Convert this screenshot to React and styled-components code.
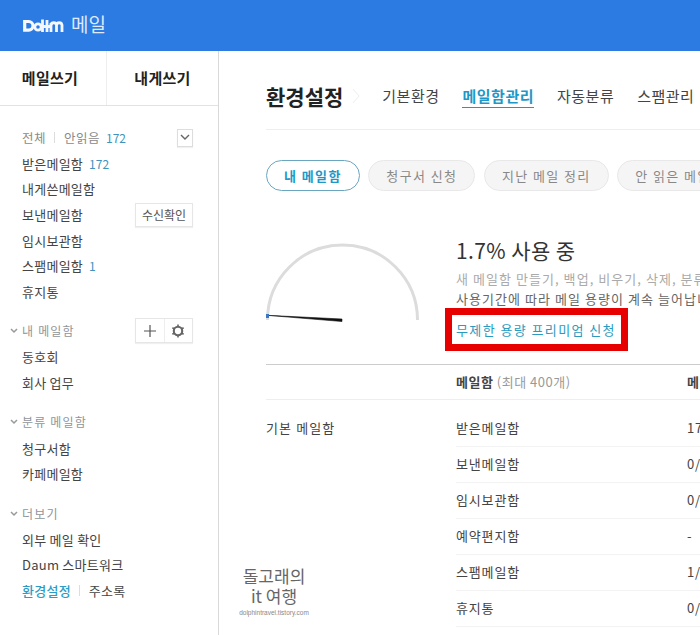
import React from 'react';
import styled, { createGlobalStyle } from 'styled-components';

const Global = createGlobalStyle`
  html, body { margin: 0; padding: 0; background: #fff; }
  body { width: 700px; height: 635px; overflow: hidden; font-family: "Noto Sans CJK KR", "Noto Sans", sans-serif; color: #333; }
  * { box-sizing: border-box; }
`;
const Page = styled.div`width: 700px; height: 635px; overflow: hidden; position: relative; display: flex; flex-direction: column;`;
const Header = styled.header`height: 51px; flex: none; background: #2b7be2; display: flex; align-items: center; padding-left: 23px; gap: 4px;`;
const LogoWord = styled.span`color: #dfe9fa; font-size: 19px; line-height: 24px; margin-top: -3px;`;
const Body = styled.div`flex: 1; display: flex; min-height: 0;`;
const Sidebar = styled.aside`width: 219px; flex: none; border-right: 1px solid #d9d9d9; height: 100%;`;
const Compose = styled.div`height: 55px; display: flex; border-bottom: 1px solid #dfe3e6;`;
const ComposeBtn = styled.div`
  flex: 1; display: flex; align-items: center; justify-content: center; font-size: 15px; font-weight: 700; color: #222; letter-spacing: 0.3px; padding-bottom: 1px;
  & + & { border-left: 1px solid #eee; }
  &:first-child { flex: 0 0 106px; padding-right: 6px; }
`;
const Nav = styled.nav`padding: 19px 25px 0 22px;`;
const Row = styled.div`height: 25.6px; display: flex; align-items: center; font-size: 13px; letter-spacing: 0.25px; color: ${p => p.$active ? '#2d9bc4' : '#444'}; font-weight: ${p => p.$active ? 500 : 400}; justify-content: ${p => p.$split ? 'space-between' : 'flex-start'};`;
const Count = styled.span`color: #3f93bd; font-size: 12px; margin-left: 6px; letter-spacing: 0;`;
const Summary = styled.span`display: flex; align-items: center; font-size: 12.5px; letter-spacing: 0.5px; color: #8a8a8a;`;
const Sep = styled.span`width: 1px; height: 11px; background: #ddd; margin: 0 9px 0 8px;`;
const Group = styled.div`margin-top: 13px;`;
const GroupHead = styled.div`height: 27px; display: flex; align-items: center; font-size: 12px; letter-spacing: 1.2px; color: #8f959a; position: relative;`;
const Caret = styled.svg`position: absolute; left: -12px; top: 10px; width: 8px; height: 7px;`;
const SmallBtn = styled.div`border: 1px solid #e6e6e6; box-shadow: 0 1px 1px #f0f0f0; display: flex; align-items: center; justify-content: center; font-size: 12px; color: #555; height: 24px; background: #fff;`;
const ChevronBox = styled(SmallBtn)`width: 16px; height: 18px; border-color: #ddd;`;
const CheckBtn = styled(SmallBtn)`width: 58px; letter-spacing: 0;`;
const ToolBtns = styled(SmallBtn)`width: 58px; height: 25px;`;
const ToolCell = styled.span`flex: 1; height: 100%; display: flex; align-items: center; justify-content: center; & + & { border-left: 1px solid #eee; }`;
const Spacer = styled.span`margin-left: auto;`;

const Main = styled.main`flex: 1; padding: 0 0 0 47px; min-width: 0; overflow: hidden;`;
const TopBar = styled.div`height: 79px; width: 600px; display: flex; align-items: center; border-bottom: 1px solid #eee; padding-top: 12px;`;
const Title = styled.h1`margin: 0; font-size: 21px; font-weight: 700; color: #222; line-height: 28px; letter-spacing: 0;`;
const Crumb = styled.svg`width: 8px; height: 20px; margin: 0 22px 0 9px;`;
const Tab = styled.span`
  font-size: 15px; line-height: 22px; margin-right: 23px; color: ${p => p.$on ? '#1f98c7' : '#444'}; font-weight: ${p => p.$on ? 700 : 400};
  border-bottom: 1px solid ${p => p.$on ? '#1f98c7' : 'transparent'}; letter-spacing: 0.5px; white-space: nowrap;
`;
const Chips = styled.div`display: flex; gap: 8.5px; margin-top: 30px; width: 600px;`;
const Chip = styled.span`
  height: 31px; flex: none; padding: 0 17px; border-radius: 16px; display: inline-flex; align-items: center; font-size: 13px; letter-spacing: 1.4px; white-space: nowrap;
  border: 1px solid ${p => p.$on ? '#6aa6c0' : '#e8e8e8'}; background: ${p => p.$on ? '#fff' : '#f5f5f5'};
  color: ${p => p.$on ? '#1f98c7' : '#888'}; font-weight: ${p => p.$on ? 700 : 400};
`;
const Usage = styled.section`display: flex; width: 600px; height: 174px; padding-top: 44px; border-bottom: 1px solid #ccc;`;
const GaugeWrap = styled.div`width: 190px; flex: none; padding-top: 7px;`;
const Info = styled.div`flex: 1; min-width: 0;`;
const Percent = styled.div`font-size: 21px; line-height: 30px; color: #333; letter-spacing: 0.4px; margin-bottom: 4px;`;
const Note = styled.div`font-size: 13px; line-height: 20px; letter-spacing: 1.05px; color: ${p => p.$dark ? '#666' : '#aaa'}; white-space: nowrap;`;
const LinkBox = styled.div`margin: -1px 0 0 -11px; border: 7px solid #e60000; padding-left: 4px; height: 43px; width: 183px; display: flex; align-items: center;`;
const PremiumLink = styled.span`font-size: 13px; letter-spacing: 1.4px; color: #2a9bbf; white-space: nowrap;`;
const Table = styled.div`width: 600px;`;
const TableHead = styled.div`display: grid; grid-template-columns: 190px 231px 1fr; height: 35px; align-items: center; font-size: 13px; border-bottom: 1px solid #eee; padding-bottom: 2px;`;
const HeadName = styled.span`font-weight: 700; color: #444; letter-spacing: 0.5px; white-space: nowrap;`;
const HeadHint = styled.span`color: #999; font-weight: 400; letter-spacing: 0.5px;`;
const TableBody = styled.div`display: grid; grid-template-columns: 190px 1fr;`;
const BoxType = styled.div`font-size: 13px; line-height: 18px; color: #444; letter-spacing: 1.1px; padding-top: 19px;`;
const FirstRows = styled.div`padding-top: 11px;`;
const DataRow = styled.div`display: grid; grid-template-columns: 231px 1fr; height: 36px; align-items: center; font-size: 13px; color: #444; border-bottom: 1px solid #f3f3f3; letter-spacing: 0.85px; padding-bottom: 3px;`;
const Watermark = styled.div`position: absolute; left: 237px; top: 566px; width: 74px; text-align: center; color: #666; pointer-events: none;`;
const MarkLine = styled.div`font-size: 17px; line-height: 20px; white-space: nowrap;`;
const MarkUrl = styled.div`font-size: 6.5px; line-height: 9px; margin-top: 2px; color: #888; font-family: "Liberation Sans", sans-serif; white-space: nowrap;`;

const Logo = () => (
  <svg width="44" height="16" viewBox="0 0 44 16" fill="none" stroke="#f4f8fe" style={{ flex: 'none' }}>
    <path d="M1.7 3.5h4a4.3 4.3 0 0 1 0 8.6h-4z" strokeWidth="3.2" />
    <circle cx="15" cy="9" r="3.2" strokeWidth="2.8" />
    <path d="M19.5 1.5v12.5" strokeWidth="2.8" />
    <path d="M24 2v12M19.5 8.5h9M28 5v9" strokeWidth="2.8" />
    <path d="M28 7a2.8 2.8 0 0 1 5.5 0v7M33.5 7a2.8 2.8 0 0 1 5.5 0v7" strokeWidth="2.8" />
  </svg>
);
const CaretIcon = () => (
  <Caret viewBox="0 0 8 7" fill="none" stroke="#999" strokeWidth="1.5"><path d="M1 2l3 3 3-3" /></Caret>
);
const NavGroup = ({ title, action, items }) => (
  <Group>
    <GroupHead><CaretIcon />{title}{action}</GroupHead>
    {items.map(t => <Row key={t}>{t}</Row>)}
  </Group>
);

const rows = [['받은메일함', '172'], ['보낸메일함', '0/0'], ['임시보관함', '0/0'], ['예약편지함', '-'], ['스팸메일함', '1/1'], ['휴지통', '0/0']];

export default function App() {
  return (
    <Page>
      <Global />
      <Header><Logo /><LogoWord>메일</LogoWord></Header>
      <Body>
        <Sidebar>
          <Compose><ComposeBtn>메일쓰기</ComposeBtn><ComposeBtn>내게쓰기</ComposeBtn></Compose>
          <Nav>
            <Row $split>
              <Summary>전체<Sep />안읽음<Count>172</Count></Summary>
              <ChevronBox>
                <svg width="10" height="7" viewBox="0 0 10 7" fill="none" stroke="#666" strokeWidth="1.4"><path d="M1 1l4 4 4-4" /></svg>
              </ChevronBox>
            </Row>
            <Row>받은메일함<Count>172</Count></Row>
            <Row>내게쓴메일함</Row>
            <Row $split>보낸메일함<CheckBtn>수신확인</CheckBtn></Row>
            <Row>임시보관함</Row>
            <Row>스팸메일함<Count>1</Count></Row>
            <Row>휴지통</Row>
            <NavGroup title="내 메일함" items={['동호회', '회사 업무']} action={
              <Spacer><ToolBtns>
                <ToolCell>
                  <svg width="12" height="12" viewBox="0 0 12 12" stroke="#555" strokeWidth="1.2"><path d="M6 0v12M0 6h12" /></svg>
                </ToolCell>
                <ToolCell>
                  <svg width="14" height="14" viewBox="0 0 14 14" fill="none" stroke="#666"><circle cx="7" cy="7" r="4.2" strokeWidth="2.1" /><path d="M7 0.5v2M7 11.5v2M1.4 3.8l1.7 1M10.9 9.2l1.7 1M1.4 10.2l1.7-1M10.9 4.8l1.7-1" strokeWidth="1.6" /></svg>
                </ToolCell>
              </ToolBtns></Spacer>
            } />
            <NavGroup title="분류 메일함" items={['청구서함', '카페메일함']} />
            <NavGroup title="더보기" items={['외부 메일 확인', 'Daum 스마트워크']} />
            <Row>
              <Row as="span" $active>환경설정</Row><Sep /><span>주소록</span>
            </Row>
          </Nav>
        </Sidebar>
        <Main>
          <TopBar>
            <Title>환경설정</Title>
            <Crumb viewBox="0 0 8 20" fill="none" stroke="#eee" strokeWidth="1"><path d="M1 3l6 7-6 7" /></Crumb>
            <Tab>기본환경</Tab><Tab $on>메일함관리</Tab><Tab>자동분류</Tab><Tab>스팸관리</Tab>
          </TopBar>
          <Chips>
            <Chip $on>내 메일함</Chip><Chip>청구서 신청</Chip><Chip>지난 메일 정리</Chip><Chip>안 읽은 메일 정리</Chip>
          </Chips>
          <Usage>
            <GaugeWrap>
              <svg width="156" height="82" viewBox="0 0 156 82" fill="none">
                <path d="M1.5 78A75 75 0 0 1 151.5 78" stroke="#dcdcdc" strokeWidth="3" />
                <path d="M1 73.3L76 77L76 79.5Z" fill="#111" stroke="#111" strokeWidth="0.6" />
                <rect x="0" y="72" width="3" height="4" fill="#3a78c2" />
              </svg>
            </GaugeWrap>
            <Info>
              <Percent>1.7% 사용 중</Percent>
              <Note>새 메일함 만들기, 백업, 비우기, 삭제, 분류 설정을 할 수 있습니다.</Note>
              <Note $dark>사용기간에 따라 메일 용량이 계속 늘어납니다.</Note>
              <LinkBox><PremiumLink>무제한 용량 프리미엄 신청</PremiumLink></LinkBox>
            </Info>
          </Usage>
          <Table>
            <TableHead><span /><HeadName>메일함 <HeadHint>(최대 400개)</HeadHint></HeadName><HeadName>메일</HeadName></TableHead>
            <TableBody>
              <BoxType>기본 메일함</BoxType>
              <FirstRows>
                {rows.map(([a, b]) => <DataRow key={a}><span>{a}</span><span>{b}</span></DataRow>)}
              </FirstRows>
            </TableBody>
          </Table>
        </Main>
      </Body>
      <Watermark>
        <MarkLine>돌고래의</MarkLine><MarkLine>it 여행</MarkLine><MarkUrl>dolphintravel.tistory.com</MarkUrl>
      </Watermark>
    </Page>
  );
}
